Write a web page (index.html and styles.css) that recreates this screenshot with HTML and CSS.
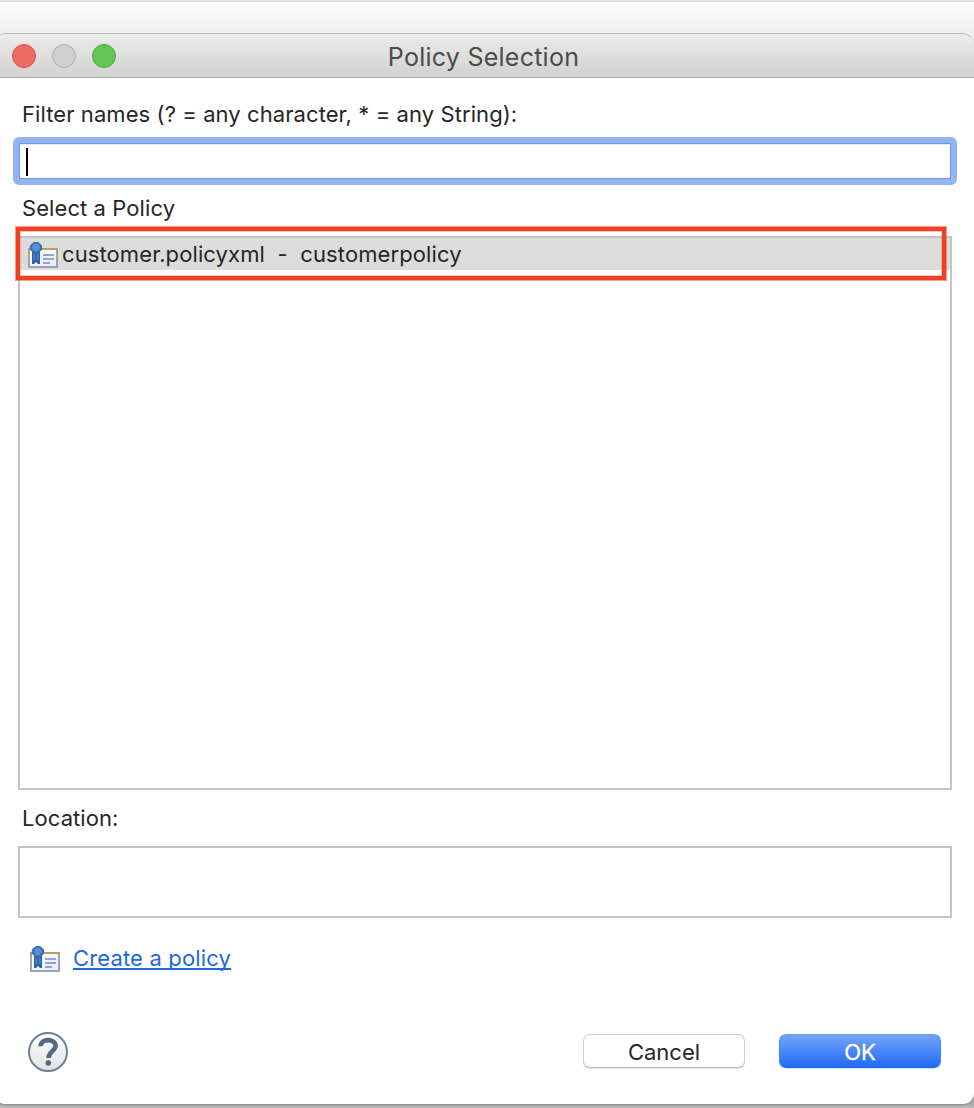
FILE: index.html
```html
<!DOCTYPE html>
<html lang="en">
<head>
<meta charset="utf-8">
<title>Policy Selection</title>
<link rel="stylesheet" href="styles.css">
</head>
<body>
<svg class="defs" width="0" height="0" aria-hidden="true">
  <defs>
    <linearGradient id="paper" x1="0" y1="0" x2="1" y2="1">
      <stop offset="0" stop-color="#ffffff"/><stop offset="1" stop-color="#e3edfa"/>
    </linearGradient>
    <linearGradient id="edge" x1="0" y1="0" x2="0" y2="1">
      <stop offset="0" stop-color="#b79f70"/><stop offset=".4" stop-color="#a9a69c"/><stop offset=".9" stop-color="#9aa3ba"/>
    </linearGradient>
    <linearGradient id="help" x1="0" y1="0" x2="0" y2="1">
      <stop offset="0" stop-color="#ffffff"/><stop offset="1" stop-color="#e2e2e2"/>
    </linearGradient>
    <symbol id="policy" viewBox="0 0 30 26">
      <rect x="1" y="7" width="28" height="18" fill="url(#paper)" stroke="url(#edge)" stroke-width="2"/>
      <path d="M15 13h11M15 17h11M15 21h7" stroke="#93a4cf" stroke-width="2"/>
      <path d="M4 9h8v13h-2l-2-2-2 2H4z" fill="#2f62a6"/>
      <path d="M6.200 12v6M9.800 12v6" stroke="#4a7ec2" stroke-width="2"/>
      <path d="M6 .5h4l3.500 3v4l-3.200 3.500H5.800L2.300 7.500v-4z" fill="#3970ae" stroke="#3970ae" stroke-linejoin="round"/>
      <circle cx="8" cy="5.500" r="3.800" fill="#5690cf"/>
    </symbol>
  </defs>
</svg>
<div class="desktop">
  <main class="dialog">
    <header class="titlebar">
      <div class="lights"><i class="light close"></i><i class="light minimize"></i><i class="light expand"></i></div>
      <h1 class="title">Policy Selection</h1>
    </header>
    <div class="content">
      <label class="label filter-label"><span>Filter names (? = any character, * = any String):</span></label>
      <div class="filter"><span class="caret"></span></div>
      <div class="label select-label"><span>Select a Policy</span></div>
      <div class="list">
        <div class="row"><svg class="policy-icon"><use href="#policy"/></svg><span class="row-text">customer.policyxml&nbsp; -&nbsp; customerpolicy</span></div>
        <div class="highlight"></div>
      </div>
      <div class="label location-label"><span>Location:</span></div>
      <div class="location"></div>
      <div class="create"><svg class="policy-icon"><use href="#policy"/></svg><a class="link">Create a policy</a></div>
      <footer class="footer">
        <svg class="help" viewBox="0 0 40 40">
          <circle cx="20" cy="20" r="19" fill="url(#help)" stroke="#6f7f9c" stroke-width="2"/>
          <path d="M12.700 14.200C12.700 6.100 27.600 6.300 27.600 13.800C27.600 19.200 20.600 18.800 20.600 26" fill="none" stroke="#556887" stroke-width="4.600"/>
          <circle cx="20.300" cy="31" r="2.800" fill="#556887"/>
        </svg>
        <div class="actions"><button class="button cancel">Cancel</button><button class="button ok">OK</button></div>
      </footer>
    </div>
  </main>
</div>
</body>
</html>
```
FILE: styles.css
```css
* { box-sizing: border-box; }
body {
  margin: 0;
  font: 22px/26px Inter, "Liberation Sans", sans-serif;
  color: #262626;
}
.defs { position: absolute; }
.desktop {
  height: 1108px;
  overflow: hidden;
  border-top: 2px solid #e2e2e0;
  padding-top: 31px;
  background: linear-gradient(#fdfdfd, #f0f0f0 31px, #c8c8c8 1060px, #a8a8a8 1102px, #bdbdbd);
}
.dialog {
  height: 1071px;
  margin-left: -6px;
  border-radius: 11px;
  overflow: hidden;
  background: #fff;
  box-shadow: 0 1px 1px #909090;
}
.titlebar {
  height: 45px;
  display: grid;
  grid-template-columns: 1fr auto 1fr;
  align-items: center;
  padding: 0 0 0 18px;
  border-top: 1px solid #b5b5b5;
  border-bottom: 1px solid #aaa;
  border-radius: 11px 11px 0 0;
  background: linear-gradient(#ececec, #d1d1d1);
}
.lights { display: flex; gap: 16px; }
.light { width: 24px; height: 24px; border: 1px solid; border-radius: 50%; }
.close { background: #ed6b60; border-color: #d9534b; }
.minimize { background: #cfcfcf; border-color: #b0b0b0; }
.expand { background: #62c655; border-color: #4eab43; }
.title {
  margin: 2px 5px 0 -14px;
  font-size: 25px;
  line-height: 30px;
  font-weight: 400;
  letter-spacing: 0.25px;
  color: #4b4b4b;
}
.content { padding: 23px 17px 0 19px; }
.label { display: block; padding-left: 9px; height: 26px; letter-spacing: .08px; }
.filter {
  height: 48px;
  margin-top: 10px;
  border: 6px solid #92b4f5;
  border-radius: 6px;
  box-shadow: inset 0 0 0 1px #6e97dd, inset 0 2px 0 0 #e4e9f2;
  padding: 5px 7px;
}
.caret { display: block; width: 2px; height: 28px; background: #000; }
.select-label { margin-top: 10px; }
.list {
  position: relative;
  height: 554px;
  margin: 15px 5px 0;
  border: 2px solid #c4c4c4;
}
.row { display: flex; align-items: center; height: 32px; padding-left: 8px; background: #dcdcdc; }
.policy-icon { width: 30px; height: 26px; flex: none; }
.row .policy-icon { margin-top: 2px; }
.row-text { margin-left: 4px; letter-spacing: .1px; }
.highlight {
  position: absolute;
  left: -4px;
  top: -11px;
  width: 930px;
  height: 53px;
  border: 4px solid #ee4023;
  box-shadow: 0 0 0 1px rgba(238, 64, 35, .5), inset 0 0 0 1px rgba(238, 64, 35, .3);
}
.location-label { margin-top: 15px; }
.location { height: 72px; margin: 15px 5px 0; border: 2px solid #c4c4c4; }
.create { display: flex; align-items: center; height: 30px; margin-top: 26px; padding-left: 17px; }
.create .policy-icon { margin-top: -1px; }
.link {
  margin: -4px 0 0 13px;
  height: 26px;
  border-bottom: 2px solid #1e68dc;
  line-height: 28px;
  letter-spacing: .15px;
  color: #1e68dc;
}
.footer { display: flex; justify-content: space-between; padding: 58px 16px 0 15px; }
.help { width: 40px; height: 40px; }
.actions { display: flex; gap: 34px; padding-top: 2px; }
.button {
  width: 162px;
  height: 34px;
  padding: 2px 0 0;
  border: 1px solid #cfcfcf;
  border-bottom-color: #b5b5b5;
  border-radius: 7px;
  background: #fff;
  font: inherit;
  color: #262626;
}
.cancel { box-shadow: 0 1px 1px #e6e6e6; }
.ok {
  border-color: #6b9cf0 #4584f4 #2068ee;
  background: linear-gradient(#73a5f6, #226af5);
  box-shadow: 0 1px 1px #d9e0ec;
  color: #fff;
  -webkit-text-stroke: .3px #fff;
}
```
